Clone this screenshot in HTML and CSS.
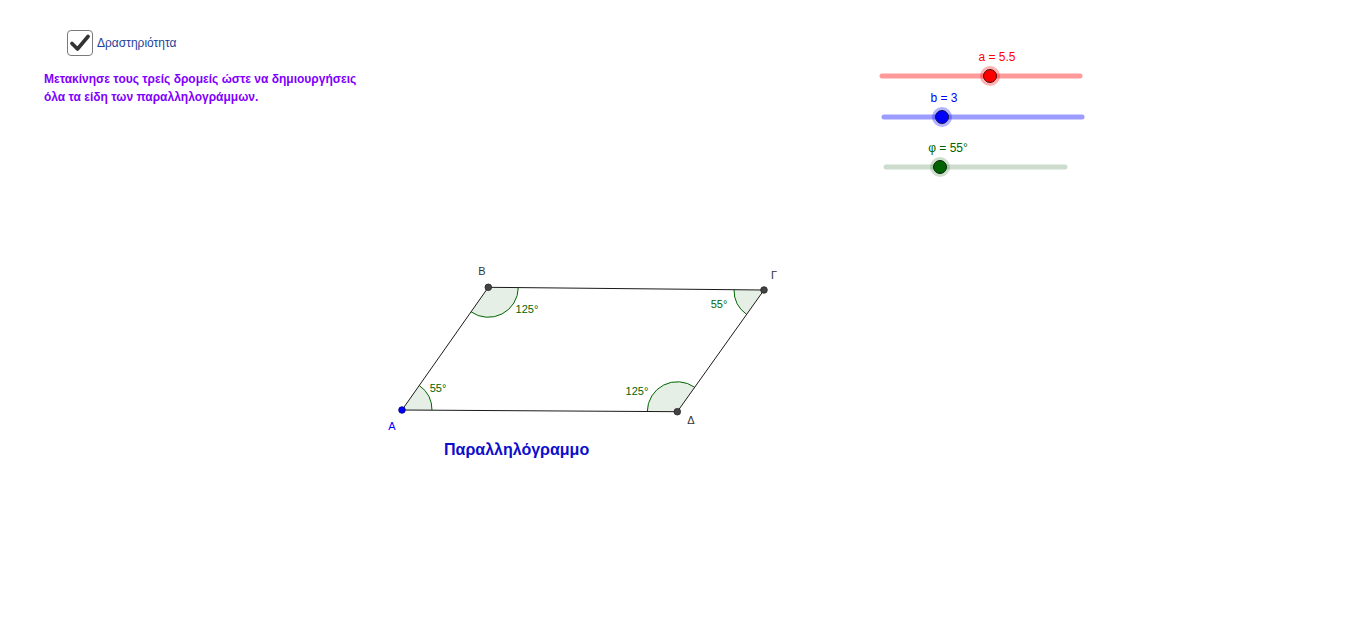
FILE: index.html
```html
<!DOCTYPE html>
<html lang="el">
<head>
<meta charset="utf-8">
<title>Παραλληλόγραμμο</title>
<link rel="stylesheet" href="styles.css">
</head>
<body>
<div class="applet">
  <div class="panel">
    <label class="check">
      <span class="box">
        <svg width="20" height="18" viewBox="0 0 20 18"><path d="M2 9.5 L7.5 15 L18 2.5" fill="none" stroke="#333" stroke-width="3.6" stroke-linecap="round" stroke-linejoin="round"/></svg>
      </span>
      <span class="check-label">Δραστηριότητα</span>
    </label>
    <p class="task">Μετακίνησε τους τρείς δρομείς ώστε να δημιουργήσεις<br>όλα τα είδη των παραλληλογράμμων.</p>
  </div>
  <svg class="canvas" width="1366" height="631" viewBox="0 0 1366 631">
    <!-- sliders -->
    <g class="slider">
      <line x1="882" y1="76" x2="1080" y2="76" stroke="#ff9a9a" stroke-width="5" stroke-linecap="round"/>
      <circle cx="990" cy="76" r="10" fill="#ff0000" fill-opacity="0.3"/>
      <circle cx="990" cy="76" r="6.5" fill="#ff0000" stroke="#4a1010" stroke-width="1"/>
      <text x="997" y="61" text-anchor="middle" class="lbl" fill="#ff0000">a = 5.5</text>
    </g>
    <g class="slider">
      <line x1="884" y1="117" x2="1082" y2="117" stroke="#9c9cff" stroke-width="5" stroke-linecap="round"/>
      <circle cx="942" cy="117" r="10" fill="#0000ff" fill-opacity="0.3"/>
      <circle cx="942" cy="117" r="6.5" fill="#0000ff" stroke="#10104a" stroke-width="1"/>
      <text x="944" y="102" text-anchor="middle" class="lbl" fill="#0000ff">b = 3</text>
    </g>
    <g class="slider">
      <line x1="886" y1="167" x2="1065" y2="167" stroke="#cddccd" stroke-width="5" stroke-linecap="round"/>
      <circle cx="940" cy="167" r="10" fill="#006400" fill-opacity="0.2"/>
      <circle cx="940" cy="167" r="6.5" fill="#006400" stroke="#102010" stroke-width="1"/>
      <text x="948" y="152" text-anchor="middle" class="lbl" fill="#006400">φ = 55°</text>
    </g>

    <!-- angle sectors -->
    <g fill="#e5efe5" stroke="none">
      <path d="M402 410 L432 410.2 A30 30 0 0 0 419.3 385.5 Z"/>
      <path d="M488.3 287.3 L518.3 287.5 A30 30 0 0 1 471 311.8 Z"/>
      <path d="M764 290 L734 289.8 A30 30 0 0 0 746.6 314.4 Z"/>
      <path d="M677.3 411.7 L647.3 411.5 A30 30 0 0 1 694.7 387.3 Z"/>
    </g>
    <g fill="none" stroke="#006400" stroke-width="1">
      <path d="M432 410.2 A30 30 0 0 0 419.3 385.5"/>
      <path d="M518.3 287.5 A30 30 0 0 1 471 311.8"/>
      <path d="M734 289.8 A30 30 0 0 0 746.6 314.4"/>
      <path d="M647.3 411.5 A30 30 0 0 1 694.7 387.3"/>
    </g>

    <!-- sides -->
    <polygon points="402,410 488.3,287.3 764,290 677.3,411.7" fill="none" stroke="#1a1a1a" stroke-width="1"/>

    <!-- points -->
    <circle cx="402" cy="410" r="3.3" fill="#0000ff" stroke="#00007a" stroke-width="0.8"/>
    <circle cx="488.3" cy="287.3" r="3.3" fill="#444" stroke="#222" stroke-width="0.8"/>
    <circle cx="764" cy="290" r="3.3" fill="#444" stroke="#222" stroke-width="0.8"/>
    <circle cx="677.3" cy="411.7" r="3.3" fill="#444" stroke="#222" stroke-width="0.8"/>

    <!-- point labels -->
    <text x="482" y="275" text-anchor="middle" class="pt" fill="#333">Β</text>
    <text x="774" y="279" text-anchor="middle" class="pt" fill="#333">Γ</text>
    <text x="392" y="430" text-anchor="middle" class="pt" fill="#0000ff">Α</text>
    <text x="691" y="424" text-anchor="middle" class="pt" fill="#333">Δ</text>

    <!-- angle labels -->
    <text x="527" y="313" text-anchor="middle" class="ang">125°</text>
    <text x="438" y="392" text-anchor="middle" class="ang">55°</text>
    <text x="719" y="308" text-anchor="middle" class="ang">55°</text>
    <text x="637" y="395" text-anchor="middle" class="ang">125°</text>

    <text x="444" y="455" class="title">Παραλληλόγραμμο</text>
  </svg>
</div>
</body>
</html>
```
FILE: styles.css
```css
html, body {
  margin: 0;
  padding: 0;
  background: #ffffff;
  font-family: "Liberation Sans", Arial, sans-serif;
}
.applet {
  position: relative;
  width: 1366px;
  height: 631px;
  overflow: hidden;
  background: #ffffff;
}
.panel {
  position: relative;
  z-index: 1;
  padding: 30px 0 0 44px;
  display: flex;
  flex-direction: column;
  align-items: flex-start;
}
.check {
  display: flex;
  align-items: center;
  gap: 4px;
  margin-left: 23px;
}
.box {
  box-sizing: border-box;
  width: 26px;
  height: 26px;
  border: 1.5px solid #7a7a7a;
  border-radius: 4px;
  background: #fff;
  display: flex;
  align-items: center;
  justify-content: center;
}
.check-label {
  font-size: 12px;
  color: #1f3f99;
}
.task {
  margin: 14px 0 0 0;
  font-size: 12px;
  font-weight: bold;
  line-height: 18px;
  color: #8000ff;
}
.canvas {
  position: absolute;
  left: 0;
  top: 0;
}
.lbl {
  font-family: "Liberation Sans", Arial, sans-serif;
  font-size: 12px;
}
.pt {
  font-family: "Liberation Sans", Arial, sans-serif;
  font-size: 11px;
}
.ang {
  font-family: "Liberation Sans", Arial, sans-serif;
  font-size: 11px;
  fill: #006400;
}
.title {
  font-family: "Liberation Sans", Arial, sans-serif;
  font-size: 16px;
  font-weight: bold;
  fill: #0d0dcc;
}
```
